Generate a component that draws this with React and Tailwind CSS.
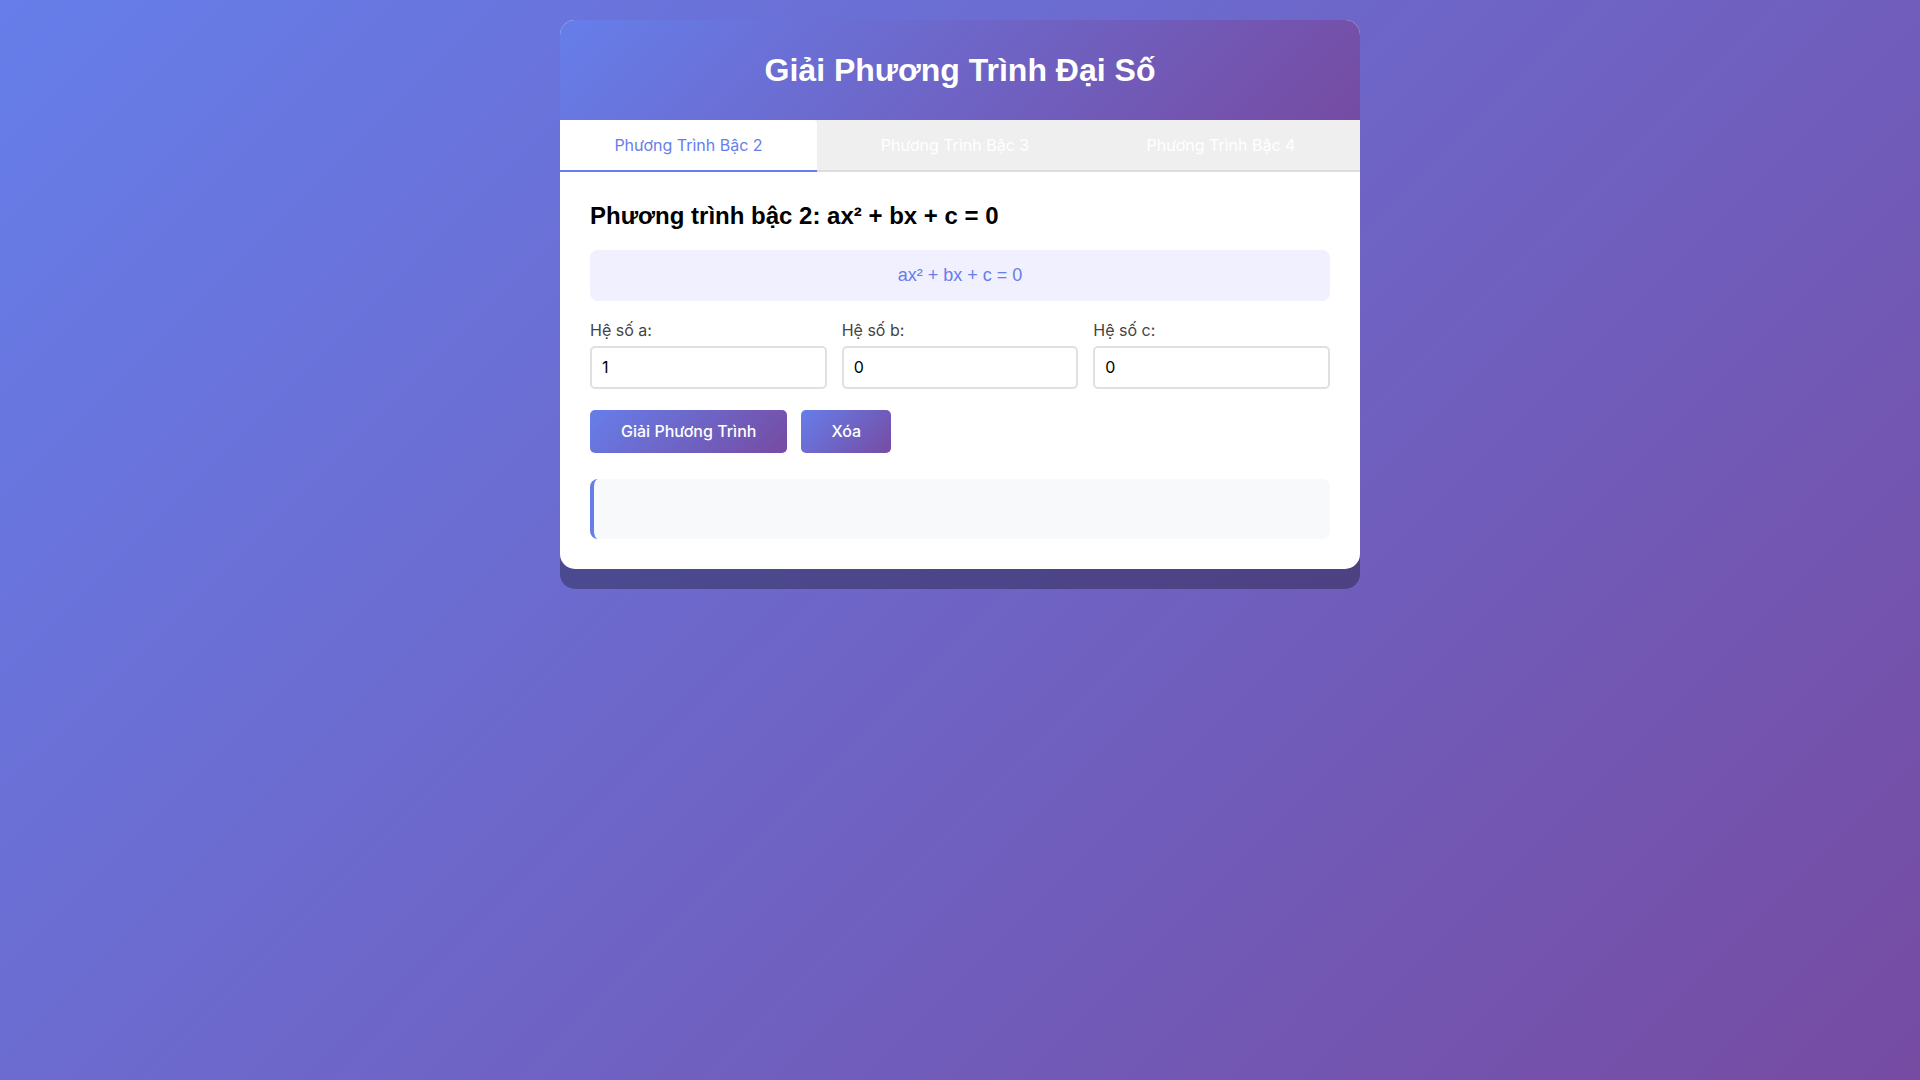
import React from "react";

const sans = "font-['Liberation_Sans',Arial,sans-serif]";
const inter = "font-['Inter','Noto_Sans',sans-serif]";

function Field({ label, value }) {
  return (
    <div className="flex flex-col">
      <label className={`${inter} text-[16px] leading-[19px] text-[#444] mb-[6px]`}>{label}</label>
      <input
        defaultValue={value}
        className={`${inter} w-full border-2 border-[#e0e0e0] rounded-[5px] px-[10px] py-[10px] text-[16px] leading-[19px] text-black outline-none bg-white`}
      />
    </div>
  );
}

export default function App() {
  return (
    <div className="min-h-screen w-full bg-[linear-gradient(135deg,#667eea_0%,#764ba2_100%)] pt-[20px]">
      <div className="mx-auto w-[800px] bg-white rounded-[15px] overflow-hidden shadow-[0_20px_0_rgba(0,0,0,0.3)]">
        <div className="bg-[linear-gradient(135deg,#667eea_0%,#764ba2_100%)] py-[31px] text-center">
          <h1 className={`${sans} text-white font-bold text-[32px] leading-[38px]`}>
            Giải Phương Trình Đại Số
          </h1>
        </div>
        <div className="flex bg-[#efefef]">
          <button className={`${inter} w-[257px] h-[52px] bg-white text-[#667eea] text-[16px] border-b-2 border-[#667eea] rounded-tr-[4px]`}>
            Phương Trình Bậc 2
          </button>
          <button className={`${inter} w-[276px] h-[52px] text-white text-[16px] border-b-2 border-[#dddddd]`}>
            Phương Trình Bậc 3
          </button>
          <button className={`${inter} flex-1 h-[52px] text-white text-[16px] border-b-2 border-[#dddddd] pr-[11px]`}>
            Phương Trình Bậc 4
          </button>
        </div>
        <div className="px-[30px] pt-[30px] pb-[30px]">
          <h2 className={`${sans} font-bold text-[24px] leading-[28px] text-black mb-[20px]`}>
            Phương trình bậc 2: ax² + bx + c = 0
          </h2>
          <div className={`${sans} bg-[#f0f0ff] rounded-[8px] py-[15px] text-center text-[18px] leading-[21px] text-[#667eea] mb-[20px]`}>
            ax² + bx + c = 0
          </div>
          <div className="grid grid-cols-3 gap-[15px] mb-[21px]">
            <Field label="Hệ số a:" value="1" />
            <Field label="Hệ số b:" value="0" />
            <Field label="Hệ số c:" value="0" />
          </div>
          <div className="flex gap-[14px] mb-[26px]">
            <button className={`${inter} bg-[linear-gradient(135deg,#667eea_0%,#764ba2_100%)] text-white font-medium text-[16px] leading-[19px] px-[31px] py-[12px] rounded-[5px]`}>
              Giải Phương Trình
            </button>
            <button className={`${inter} bg-[linear-gradient(135deg,#667eea_0%,#764ba2_100%)] text-white font-medium text-[16px] leading-[19px] px-[30px] py-[12px] rounded-[5px]`}>
              Xóa
            </button>
          </div>
          <div className="min-h-[60px] bg-[#f8f9fa] border-l-4 border-[#667eea] rounded-[8px]"></div>
        </div>
      </div>
    </div>
  );
}
